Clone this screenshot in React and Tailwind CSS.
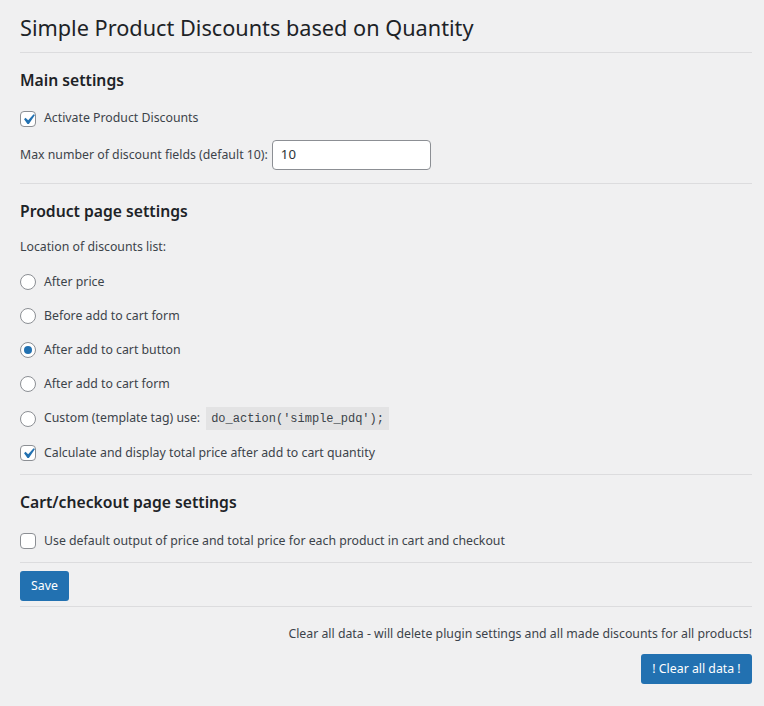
import React from "react";

const font = "font-['Noto_Sans',sans-serif]";

function Checkbox({ checked }) {
  return (
    <span className="relative inline-flex h-4 w-4 shrink-0 items-center justify-center rounded-[4px] border border-[#8c8f94] bg-white">
      {checked && (
        <svg viewBox="0 0 20 20" className="absolute left-[-3px] top-[-3px] h-[21px] w-[21px]">
          <path d="M14.83 4.89l1.34.94-5.81 8.38H9.02L5.78 9.67l1.34-1.25 2.57 2.4z" fill="#2271b1" />
        </svg>
      )}
    </span>
  );
}

function Radio({ checked }) {
  return (
    <span className="inline-flex h-4 w-4 shrink-0 items-center justify-center rounded-full border border-[#8c8f94] bg-white">
      {checked && <span className="h-2 w-2 rounded-full bg-[#2271b1]" />}
    </span>
  );
}

function Row({ children, h = "h-[34px]" }) {
  return <div className={`flex ${h} items-center gap-2 text-[12.3px] text-[#3c434a]`}>{children}</div>;
}

function Hr() {
  return <div className="h-px bg-[#dcdcde]" />;
}

export default function App() {
  return (
    <div className={`min-h-[706px] bg-[#f0f0f1] pl-5 pr-3 ${font}`}>
      <div className="flex h-[52px] items-center pt-1">
        <h1 className="text-[21.7px] font-normal text-[#1d2327]">Simple Product Discounts based on Quantity</h1>
      </div>
      <Hr />
      <h2 className="pb-[13px] pt-[14px] text-[15.7px] font-semibold leading-[27px] text-[#1d2327]">Main settings</h2>
      <div className="flex h-[22px] items-center gap-2 pt-px text-[12.3px] text-[#3c434a]">
        <Checkbox checked />
        <span>Activate Product Discounts</span>
      </div>
      <div className="mt-[11px] flex h-[30px] items-center gap-1 text-[12.3px] text-[#3c434a]">
        <span>Max number of discount fields (default 10):</span>
        <div className="flex h-[30px] w-[159px] items-center rounded-[4px] border border-[#8c8f94] bg-white px-2 text-[13.2px] text-[#2c3338]">
          10
        </div>
      </div>
      <div className="mt-[13px]">
        <Hr />
      </div>
      <h2 className="pb-[5px] pt-[14px] text-[15.7px] font-semibold leading-[27px] text-[#1d2327]">Product page settings</h2>
      <Row h="h-[35px]">
        <span>Location of discounts list:</span>
      </Row>
      <Row>
        <Radio />
        <span>After price</span>
      </Row>
      <Row>
        <Radio />
        <span>Before add to cart form</span>
      </Row>
      <Row>
        <Radio checked />
        <span>After add to cart button</span>
      </Row>
      <Row>
        <Radio />
        <span>After add to cart form</span>
      </Row>
      <Row h="h-[35px]">
        <Radio />
        <span>Custom (template tag) use:</span>
        <code className="ml-[-2px] bg-[#e3e3e4] px-[5px] pb-[2px] pt-[3px] font-['Liberation_Mono',monospace] text-[12px] text-[#3c434a]">
          do_action('simple_pdq');
        </code>
      </Row>
      <Row>
        <Checkbox checked />
        <span>Calculate and display total price after add to cart quantity</span>
      </Row>
      <div className="mt-[4px]">
        <Hr />
      </div>
      <h2 className="pb-[8px] pt-[14px] text-[15.7px] font-semibold leading-[27px] text-[#1d2327]">Cart/checkout page settings</h2>
      <Row>
        <Checkbox />
        <span className="pt-px">Use default output of price and total price for each product in cart and checkout</span>
      </Row>
      <div className="mt-[4px]">
        <Hr />
      </div>
      <div className="mt-[8px] flex">
        <button className="h-[30px] w-[49px] rounded-[3px] bg-[#2271b1] text-[12.3px] text-white">Save</button>
      </div>
      <div className="mt-[5px]">
        <Hr />
      </div>
      <div className="mt-[17px] flex h-5 items-center justify-end text-[12.3px] text-[#3c434a]">
        Clear all data - will delete plugin settings and all made discounts for all products!
      </div>
      <div className="mt-[10px] flex justify-end">
        <button className="h-[30px] w-[111px] rounded-[3px] bg-[#2271b1] text-[12.3px] text-white">! Clear all data !</button>
      </div>
    </div>
  );
}
